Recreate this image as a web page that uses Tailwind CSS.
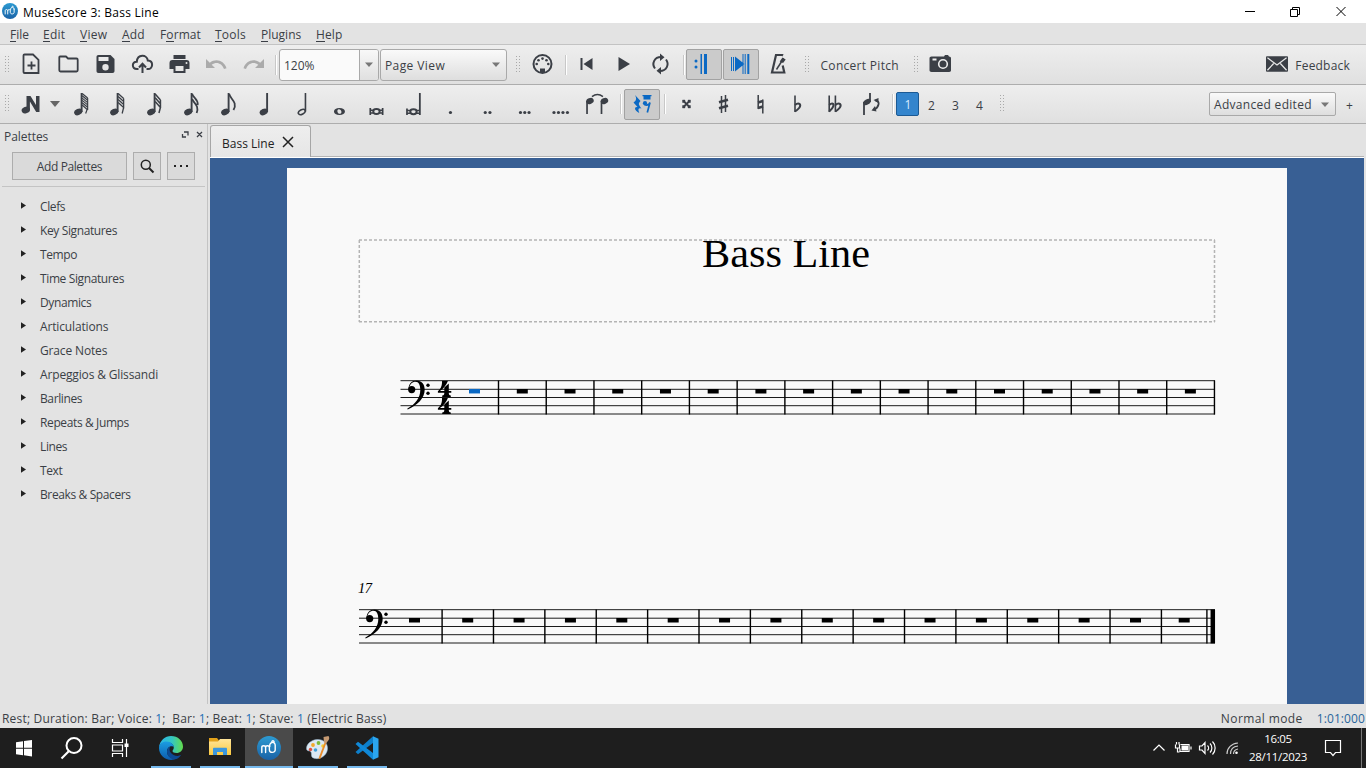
<!DOCTYPE html>
<html lang="en">
<head>
<meta charset="utf-8">
<title>MuseScore 3: Bass Line</title>
<script src="https://cdn.jsdelivr.net/npm/@tailwindcss/browser@4"></script>
</head>
<body class="w-[1366px] h-[768px] overflow-hidden flex flex-col bg-[#e3e3e3] text-[#3b3f46] text-[12px] leading-[16px] whitespace-nowrap font-['Open_Sans','Noto_Sans',sans-serif]">
<svg class="absolute w-0 h-0">
  <defs>
    <linearGradient id="edgeA" x1="0" y1="0" x2="1" y2="0"><stop offset="0" stop-color="#2bb5ea"/><stop offset=".55" stop-color="#35c6c0"/><stop offset="1" stop-color="#63dc4b"/></linearGradient>
    <linearGradient id="edgeB" x1="0" y1="0" x2="0" y2="1"><stop offset="0" stop-color="#1b9de2"/><stop offset="1" stop-color="#0d5cae"/></linearGradient>
    <linearGradient id="msg" x1="0" y1="0" x2="0" y2="1"><stop offset="0" stop-color="#2d9bd2"/><stop offset="1" stop-color="#1a62a6"/></linearGradient>
    <linearGradient id="fold" x1="0" y1="0" x2="0" y2="1"><stop offset="0" stop-color="#ffe59a"/><stop offset="1" stop-color="#fbc93f"/></linearGradient>
  </defs>
  <symbol id="grip" viewBox="0 0 5 18"><path d="M.5 0v18M3.500 0v18" stroke="#a9a9a9" stroke-width="1" stroke-dasharray="1 2"/></symbol>
  <symbol id="head" viewBox="0 0 24 24"><ellipse cx="8.800" cy="20" rx="4.300" ry="3.100" transform="rotate(-22 8.800 20)"/><path d="M11.200 1h1.900v19h-1.900z"/></symbol>
  <symbol id="mu" viewBox="0 0 24 24"><circle cx="12" cy="12" r="12" fill="url(#msg)"/><path d="M4.800 16.500V11.500c0-2.300 3.800-2.300 3.800 0v5M8.600 11.500c0-2.300 3.800-2.300 3.800 0v2.500c0 3.200 5.800 3.200 5.800 0V9M12.800 10.500c-.8-5 5.400-5.500 5.400-1M14.800 5.800c.3-1.500 2-1.500 2.300 0" fill="none" stroke="#fff" stroke-width="1.400" stroke-linecap="round"/></symbol>
  <symbol id="clef" viewBox="0 0 26 32"><circle cx="5.200" cy="9.300" r="3.600"/><path d="M2 9C2 3.500 5.500 .3 10 .3c5 0 8.200 3.500 8.200 9.200 0 8.500-7.200 15.500-17 19.700l-.5-.8C9 24 13.800 17.500 13.800 9.800 13.800 4.500 12.300 1.400 9 1.400 5.800 1.400 3 4 2.800 8z"/><circle cx="21.500" cy="5" r="1.700"/><circle cx="21.500" cy="13" r="1.700"/></symbol>
  <symbol id="four" viewBox="0 0 15 17"><path d="M4.500 .2h6C9 4.500 6 8 2.500 10.500h4.300V7l4.500-3.900v7.400h2.500v1.800h-2.500c0 1.700.4 2.600 2 2.800v1.300H4.700v-1.300c1.700-.2 2.100-1.100 2.100-2.800H.3v-1.600C3.800 8 4.700 4.500 4.500 .2z"/></symbol>
</svg>

<header class="h-[23px] shrink-0 bg-white flex items-center text-black">
  <svg class="ml-[2px] mb-[1px] w-4 h-4"><use href="#mu"/></svg>
  <span class="ml-[5px] mt-[2px] tracking-[0.25px]">MuseScore 3: Bass Line</span>
  <svg class="ml-auto w-[122px] h-[22px]" viewBox="1244 0 122 22" fill="none" stroke="#000"><path d="M1245 10.500h10M1290.500 8.500h7v7h-7zM1292.500 8.500v-2h7v7h-2M1336.500 6l9 9M1345.500 6l-9 9"/></svg>
</header>

<nav class="h-[21px] shrink-0 pl-[10px] pt-[2px] flex items-center [&>span]:shrink-0 [&_u]:no-underline [&_u]:inline-block [&_u]:h-[15px] [&_u]:border-b [&_u]:border-[#3b3f46]">
  <span class="w-[33px]"><u>F</u>ile</span><span class="w-[37px] tracking-[0.2px]"><u>E</u>dit</span><span class="w-[42px] tracking-[0.25px]"><u>V</u>iew</span><span class="w-[38px] tracking-[0.2px]"><u>A</u>dd</span><span class="w-[55px] tracking-[0.1px]">F<u>o</u>rmat</span><span class="w-[46px] tracking-[0.25px]"><u>T</u>ools</span><span class="w-[55px]"><u>P</u>lugins</span><span class="tracking-[0.1px]"><u>H</u>elp</span>
</nav>

<div class="h-[41px] shrink-0 pl-[5px] flex items-center border-t border-[#c3c3c3] border-b border-b-[#adadad] bg-linear-to-b from-[#eeeeee] to-[#e0e0e0] [&>*]:shrink-0">
  <svg class="w-[5px] h-[18px]"><use href="#grip"/></svg>
  <div class="ml-[3px] w-[259px] mb-px flex [&>svg]:w-[37px] [&>svg]:h-6 text-[#3b3f46]">
    <svg viewBox="-6.500 0 37 24" fill="none" stroke="currentColor" stroke-width="1.800"><path d="M5 2.500h8.500l5.500 5.300v13.200H5c-.7 0-1-.3-1-1V3.500c0-.7.3-1 1-1zM12 9.500v8M8 13.500h8"/></svg>
    <svg viewBox="-6.500 0 37 24" fill="none" stroke="currentColor" stroke-width="1.800" stroke-linejoin="round"><path d="M3.500 4.500h6l2 2H20c.8 0 1.200.4 1.200 1.200v10.600c0 .8-.4 1.200-1.200 1.200H4c-.8 0-1.200-.4-1.200-1.200V5.300c0-.5.200-.8.7-.8z"/></svg>
    <svg viewBox="-6.500 0 37 24" fill="currentColor" fill-rule="evenodd"><path d="M5 3h12l4 4v12c0 1.300-.7 2-2 2H5c-1.300 0-2-.7-2-2V5c0-1.300.7-2 2-2zm0 2v4h10V5zm7 7a3.200 3.200 0 1 0 0 6.400 3.200 3.200 0 0 0 0-6.400z"/></svg>
    <svg viewBox="-6.500 0 37 24" fill="none" stroke="currentColor" stroke-width="2"><path d="M8 17H6.500C1 17 1 9.500 6.300 9.700 7 2 16.500 2.200 17.300 8.500 23.500 9 22.500 17 17.500 17H16M12 21v-8M8.500 15.500l3.500-3.800 3.500 3.800"/></svg>
    <svg viewBox="-6.500 0 37 24" fill="currentColor" fill-rule="evenodd"><path d="M6 3h12v4H6zM5 8h14c2 0 3 1 3 3v6h-4v4H6v-4H2v-6c0-2 1-3 3-3zm3 6v5h8v-5zm11-4a1 1 0 1 0 0 2 1 1 0 0 0 0-2z"/></svg>
    <svg viewBox="-6.500 0 37 24" fill="#ababab"><path d="M1.500 7v9h9L7.200 12.700c5-3.500 10.300-1.200 12.300 4.300l2.500-.8C19.500 8.500 11.500 6 5.300 10.700z"/></svg>
    <svg viewBox="-6.500 0 37 24" fill="#ababab"><path d="M22.500 7v9h-9l3.300-3.300C11.800 9.200 6.500 11.500 4.500 17L2 16.200C4.500 8.500 12.500 6 18.700 10.700z"/></svg>
  </div>
  <i class="ml-[3px] w-[2px] h-5 border-l border-[#c8c8c8] bg-white"></i>
  <div class="ml-[2px] w-[100px] h-8 rounded-[3px] border border-[#a9a9a9] bg-[#fafafa] flex items-center overflow-hidden">
    <span class="pl-[4px] pt-[3px] w-[79px]">120%</span>
    <div class="flex-1 h-full border-l border-[#a9a9a9] bg-linear-to-b from-[#f8f8f8] to-[#e0e0e0] flex items-center justify-center"><svg class="w-2 h-[5px]" viewBox="0 0 8 5" fill="#777"><path d="M0 .5h8L4 5z"/></svg></div>
  </div>
  <div class="ml-[1px] w-[127px] h-8 rounded-[3px] border border-[#a9a9a9] bg-linear-to-b from-[#fafafa] to-[#dedede] flex items-center justify-between pl-1 pr-[6px]">
    <span class="pt-[3px] tracking-[0.4px]">Page View</span><svg class="w-2 h-[5px]" viewBox="0 0 8 5" fill="#777"><path d="M0 .5h8L4 5z"/></svg>
  </div>
  <svg class="ml-[9px] w-[5px] h-[18px]"><use href="#grip"/></svg>
  <svg class="ml-[2.500px] mb-px w-[37px] h-6" viewBox="-6.500 0 37 24"><circle cx="12" cy="12" r="9" fill="none" stroke="#3b3f46" stroke-width="2"/><g fill="#3b3f46"><path d="M9.500 16.500h5V21h-5z"/><circle cx="6.200" cy="12" r="1.300"/><circle cx="17.800" cy="12" r="1.300"/><circle cx="8" cy="8.300" r="1.300"/><circle cx="16" cy="8.300" r="1.300"/><circle cx="12" cy="6.600" r="1.300"/></g></svg>
  <i class="ml-[4px] w-[2px] h-5 border-l border-[#c8c8c8] bg-white"></i>
  <div class="ml-[1px] mb-px flex [&>svg]:w-[37px] [&>svg]:h-6 text-[#3b3f46]">
    <svg viewBox="-6.500 0 37 24" fill="currentColor"><path d="M6 6h2v12H6zM18 6v12L9 12z"/></svg>
    <svg viewBox="-6.500 0 37 24" fill="currentColor"><path d="M7 5l11.500 7L7 19z"/></svg>
    <svg viewBox="-6.500 0 37 24"><path d="M12.500 5C6 5 2.800 11.500 6.500 16.500M11.500 19c6.500 0 9.700-6.500 6-11.500" fill="none" stroke="currentColor" stroke-width="2"/><path d="M11.500 1.500v7.500L16 5.200zM12.500 15v7.500L8 18.800z" fill="currentColor"/></svg>
  </div>
  <i class="ml-[4px] w-[2px] h-5 border-l border-[#c8c8c8] bg-white"></i>
  <div class="ml-[1px] mb-px w-9 h-[31px] rounded-[2px] border border-[#a2a2a2] bg-[#cbcbcb] flex items-center justify-center"><svg class="w-6 h-6" fill="#0b69c4" viewBox="0 0 24 24"><circle cx="4" cy="9" r="1.500"/><circle cx="4" cy="15" r="1.500"/><path d="M8.500 2H10v20H8.500zM12 2h3v20h-3z"/></svg></div>
  <div class="ml-[1px] mb-px w-9 h-[31px] rounded-[2px] border border-[#a2a2a2] bg-[#cbcbcb] flex items-center justify-center"><svg class="w-6 h-6" fill="#0b69c4" viewBox="0 0 24 24"><path d="M2 5h1v14H2zM4 5h1v14H4zM6 4.500L15.500 12 6 19.500zM13.500 2h1v20h-1zM15.700 2h1v20h-1zM18.300 2h2v20h-2z"/></svg></div>
  <svg class="ml-px mb-px w-[37px] h-6" viewBox="-6.500 0 37 24" fill="none" stroke="#3b3f46"><path d="M16.500 3.500L15.800 3H9.500L5.500 20.500h12.300l-1.600-7" stroke-width="2.200"/><path d="M10 17.500L17 6.500" stroke-width="1.500"/><path d="M13.200 9.500l2.800-4 3.200 2-2.600 3.600z" fill="#3b3f46" stroke="none"/></svg>
  <svg class="ml-[8px] w-[5px] h-[18px]"><use href="#grip"/></svg>
  <span class="ml-[11px] w-[76px] pt-[3px] tracking-[0.3px]">Concert Pitch</span>
  <svg class="ml-[17px] w-[5px] h-[18px]"><use href="#grip"/></svg>
  <svg class="ml-[3px] mb-px w-[37px] h-6" viewBox="-6.500 0 37 24"><path d="M3 4.500h12.500l1-1.500h3l1 1.500c1.200 0 2 .7 2 1.800v12c0 1.200-.6 1.700-1.800 1.700H3c-1.200 0-2-.5-2-1.700v-12c0-1.100.8-1.800 2-1.800z" fill="#3b3f46"/><circle cx="14.500" cy="12" r="4.300" fill="none" stroke="#ededed" stroke-width="1.600"/><path d="M4 7.500h4" stroke="#eee" stroke-width="2"/></svg>
  <div class="ml-auto mr-4 flex items-center"><svg class="mb-[2px] w-[22px] h-4" viewBox="0 0 23 16"><rect width="23" height="16" rx="1" fill="#3b3f46"/><path d="M1.500 1.500L11.500 9l10-7.500M1.500 14.500L8 7.500M21.500 14.500L15 7.500" fill="none" stroke="#e8e8e8" stroke-width="1.300"/></svg><span class="ml-[7px] pt-[2px] tracking-[0.2px]">Feedback</span></div>
</div>

<div class="h-[39px] shrink-0 pl-[5px] flex items-center border-b border-[#adadad] bg-linear-to-b from-[#eeeeee] to-[#e0e0e0] [&>*]:shrink-0">
  <svg class="w-[5px] h-[18px]"><use href="#grip"/></svg>
  <svg class="ml-[9px] w-6 h-6" viewBox="0 0 24 24" fill="#3b3f46"><ellipse cx="6.800" cy="18" rx="4.300" ry="3.200" transform="rotate(-22 6.800 18)"/><path d="M7.500 4h4l5.500 9V4h3.500v16h-3.300L10.900 9.500V18H7.500z"/></svg>
  <svg class="ml-[6.500px] w-[10px] h-[6px]" viewBox="0 0 10 6" fill="#666"><path d="M0 0h10L5 6z"/></svg>
  <div class="ml-[3px] flex [&>svg]:w-[36.930px] [&>svg]:h-6 text-[#3b3f46]">
    <svg viewBox="-6.500 0 37 24" fill="currentColor"><use href="#head" width="24" height="24"/><path d="M12.700 1.500l5.500 4.500M12.700 3.800l5.500 4.500M12.700 6.100l5.500 4.500M12.700 8.400l5.500 4.500M12.700 10.700l5.500 4.500M12.700 13l5 4.500-1.500 4M18.200 6v12" fill="none" stroke="currentColor" stroke-width="1.200"/></svg>
    <svg viewBox="-6.500 0 37 24" fill="currentColor"><use href="#head" width="24" height="24"/><path d="M12.700 1.500l5.500 5M12.700 4.500l5.500 5M12.700 7.500l5.500 5M12.700 10.500l5.500 5-1.500 6M18.200 6.500v10" fill="none" stroke="currentColor" stroke-width="1.300"/></svg>
    <svg viewBox="-6.500 0 37 24" fill="currentColor"><use href="#head" width="24" height="24"/><path d="M12.700 2l5.300 6M12.700 5.800l5.300 6M12.700 9.500l5.300 6-1.500 5.500M18 8v8" fill="none" stroke="currentColor" stroke-width="1.500"/></svg>
    <svg viewBox="-6.500 0 37 24" fill="currentColor"><use href="#head" width="24" height="24"/><path d="M12.700 2c1 4 6.500 5 5.500 11M12.700 7c1 4 7.500 6 4.500 14" fill="none" stroke="currentColor" stroke-width="1.800"/></svg>
    <svg viewBox="-6.500 0 37 24" fill="currentColor"><use href="#head" width="24" height="24"/><path d="M12.700 2c1 5 9 8 4.300 16" fill="none" stroke="currentColor" stroke-width="1.800"/></svg>
    <svg viewBox="-6.500 0 37 24" fill="currentColor"><use href="#head" x="1.500" width="24" height="24"/></svg>
    <svg viewBox="-6.500 0 37 24" fill="none" stroke="currentColor"><ellipse cx="11.300" cy="20" rx="3.700" ry="2.200" transform="rotate(-28 11.300 20)" stroke-width="1.600"/><path d="M15 1v18.500" stroke-width="1.600"/></svg>
    <svg viewBox="-6.500 0 37 24" fill="currentColor" fill-rule="evenodd"><path d="M12 16c3.300 0 5.500 1.500 5.500 3.500S15.300 23 12 23s-5.500-1.500-5.500-3.500S8.700 16 12 16zm-.7 1.200c-2.300.3-1.500 4.800 1.400 4.600 2.300-.3 1.500-4.800-1.400-4.600z"/></svg>
    <svg viewBox="-6.500 0 37 24" fill="none" stroke="currentColor"><path d="M5.800 16v7M18.200 16v7" stroke-width="1.700"/><path d="M6 18.200h3M6 21h3M15 18.200h3M15 21h3" stroke-width="1.600"/><ellipse cx="12" cy="19.500" rx="3.200" ry="2.500" stroke-width="2"/></svg>
    <svg viewBox="-6.500 0 37 24" fill="none" stroke="currentColor"><path d="M18.400 1v22" stroke-width="1.800"/><path d="M5.500 16.500v6.500" stroke-width="1.700"/><path d="M5.500 18.500h3M5.500 21.300h3M15 18.500h3M15 21.300h3" stroke-width="1.500"/><ellipse cx="12" cy="19.800" rx="3.200" ry="2.500" stroke-width="2"/></svg>
    <svg viewBox="-6.500 0 37 24" fill="currentColor"><circle cx="12" cy="20.500" r="1.600"/></svg>
    <svg viewBox="-6.500 0 37 24" fill="currentColor"><circle cx="9.800" cy="20.500" r="1.600"/><circle cx="14.500" cy="20.500" r="1.600"/></svg>
    <svg viewBox="-6.500 0 37 24" fill="currentColor"><circle cx="8" cy="20.500" r="1.600"/><circle cx="12.300" cy="20.500" r="1.600"/><circle cx="16.600" cy="20.500" r="1.600"/></svg>
    <svg viewBox="-6.500 0 37 24" fill="currentColor"><circle cx="5.500" cy="20.500" r="1.600"/><circle cx="10" cy="20.500" r="1.600"/><circle cx="14.500" cy="20.500" r="1.600"/><circle cx="19" cy="20.500" r="1.600"/></svg>
    <svg viewBox="-6.500 0 37 24" fill="currentColor"><ellipse cx="4.500" cy="9" rx="3.900" ry="2.900" transform="rotate(-24 4.500 9)"/><ellipse cx="19" cy="9" rx="3.900" ry="2.900" transform="rotate(-24 19 9)"/><path d="M.7 9h1.700v13H.7zM15.200 9h1.700v13h-1.700z"/><path d="M6.500 4.500c4-3 7-3 11 0" fill="none" stroke="currentColor" stroke-width="1.600"/></svg>
  </div>
  <i class="ml-[4px] w-[2px] h-5 border-l border-[#c8c8c8] bg-white"></i>
  <div class="ml-[1.500px] w-9 h-[31px] rounded-[2px] border border-[#a2a2a2] bg-[#cbcbcb] flex items-center justify-center"><svg class="w-6 h-6" viewBox="0 0 24 24" fill="#0b69c4"><path d="M5 3l5.500 6c-2.500 2.500-2 3.500 1 7.500-3-.8-4 .5-2.200 4.500C4 18.500 4 14.500 7.500 15L3.500 10.500C6.500 8.500 6.800 6.500 5 3z"/><path d="M13.500 4h7v3.500h-7zM12.500 3h9v1.200h-9z"/><circle cx="15" cy="11.200" r="2.100"/><path d="M14.500 12.700c3 1 4.500.3 5.500-2.200L17.300 20.500" fill="none" stroke="#0b69c4" stroke-width="1.700"/></svg></div>
  <i class="ml-[4.500px] w-[2px] h-5 border-l border-[#c8c8c8] bg-white"></i>
  <div class="ml-[1.500px] flex [&>svg]:w-[37px] [&>svg]:h-6 text-[#3b3f46]">
    <svg viewBox="-6.500 0 37 24" fill="none" stroke="currentColor"><path d="M9 9l6 6M15 9l-6 6" stroke-width="1.800"/><path d="M8 8h2.500v2.500H8zM13.500 8H16v2.500h-2.500zM8 13.500h2.500V16H8zM13.500 13.500H16V16h-2.500z" fill="currentColor" stroke-width=".4"/></svg>
    <svg viewBox="-6.500 0 37 24" fill="none" stroke="currentColor"><path d="M10 4v17M14 3v17" stroke-width="1.500"/><path d="M7.500 10.200l9-2.500M7.500 16.200l9-2.500" stroke-width="2.500"/></svg>
    <svg viewBox="-6.500 0 37 24" fill="none" stroke="currentColor"><path d="M9.700 3v14M14.300 7.500v14" stroke-width="1.500"/><path d="M9.500 10.500l5-1.500M9.500 16l5-1.500" stroke-width="2.500"/></svg>
    <svg viewBox="-6.500 0 37 24" fill="none" stroke="currentColor"><path d="M9.500 3.500V20" stroke-width="1.600"/><path d="M9.500 13c3-2.500 6-1.500 5 1.500-.7 2-2.500 3.300-5 5" stroke-width="2.100"/></svg>
    <svg viewBox="-6.500 0 37 24" fill="none" stroke="currentColor"><path d="M6.700 3.500V20M12.900 3.500V20" stroke-width="1.600"/><path d="M6.700 13c3-2.500 5-1.500 4 1.500-.7 2-2 3.300-4 5M12.900 13c3-2.500 6-1.500 5 1.500-.7 2-2.500 3.300-5 5" stroke-width="2.100"/></svg>
    <svg viewBox="-6.500 0 37 24" fill="none" stroke="currentColor"><path d="M4.500 10v13M10.500 1v9" stroke-width="1.800"/><ellipse cx="7.500" cy="10" rx="4" ry="2.600" transform="rotate(-28 7.500 10)" fill="currentColor" stroke="none"/><path d="M16 8.500c3 .5 3.500 2 3 4-.5 2.500-2 4-4.500 5" stroke-width="1.800"/><path d="M14 8l5-2v5zM15.500 14l-3.500 4.500 5 1z" fill="currentColor" stroke="none"/></svg>
  </div>
  <i class="ml-[2px] w-[2px] h-5 border-l border-[#c8c8c8] bg-white"></i>
  <div class="ml-[2.500px] w-[23px] h-6 rounded-[2px] border border-[#1c5a94] bg-[#3485cd] text-[#d8ecff] flex items-center justify-center pt-[2px]">1</div>
  <div class="flex [&>span]:w-6 [&>span]:text-center pt-[3px]"><span>2</span><span>3</span><span>4</span></div>
  <svg class="ml-[9px] w-[5px] h-[18px]"><use href="#grip"/></svg>
  <div class="ml-auto w-[127px] h-6 rounded-[2px] border border-[#a9a9a9] bg-linear-to-b from-[#fafafa] to-[#dedede] flex items-center justify-between pl-1 pr-[6px]"><span class="pt-[2px] tracking-[0.3px]">Advanced edited</span><svg class="w-2 h-[5px]" viewBox="0 0 8 5" fill="#777"><path d="M0 .5h8L4 5z"/></svg></div>
  <span class="w-[30px] pl-[10px] pt-[3px]">+</span>
</div>

<main class="flex-1 min-h-0 flex">
  <aside class="w-[208px] shrink-0 border-r border-[#c4c4c4] flex flex-col">
    <div class="h-[24px] pl-1 pr-[4px] flex items-center"><span class="pt-px tracking-[-0.05px]">Palettes</span>
      <svg class="ml-auto mb-1 w-[22px] h-[9px]" viewBox="0 0 22 9" fill="none" stroke="#3b3f46" stroke-width="1.300"><path d="M3 2h4v3.500M5 7H1.500V4M16 2l5 5M21 2l-5 5"/></svg></div>
    <div class="mt-[4px] ml-3 flex h-7 gap-[6px] [&>*]:border [&>*]:border-[#adadad] [&>*]:bg-[#dadada] [&>*]:flex [&>*]:items-center [&>*]:justify-center">
      <div class="w-[115px] pt-[2px] tracking-[-0.4px]">Add Palettes</div>
      <div class="w-7"><svg class="w-4 h-4" viewBox="0 0 16 16" fill="none" stroke="#222"><circle cx="6.800" cy="6.800" r="4.500" stroke-width="1.500"/><path d="M10 10l4.500 4.500" stroke-width="2"/></svg></div>
      <div class="w-7"><svg class="w-4 h-4" viewBox="0 0 16 16" fill="#222"><path d="M1 7h2v2H1zM7 7h2v2H7zM13 7h2v2h-2z"/></svg></div>
    </div>
    <div class="mx-[2px] mt-[6px] h-px bg-[#c4c4c4]"></div>
    <ul id="palettes" class="mt-[7px]"></ul>
  </aside>
  <section class="flex-1 min-w-0 pl-[2px] pr-[2px] flex flex-col">
    <div class="h-[34px] shrink-0 flex items-end border-b border-white">
      <div class="w-[101px] h-[32px] rounded-t-[3px] border border-b-0 border-[#a6a6a6] bg-linear-to-b from-[#eeeeee] to-[#e6e6e6] flex items-center pl-[11px] pt-[3px] text-[#222]"><span class="pt-px">Bass Line</span><svg class="ml-[8px] mb-[3px] w-3 h-3" viewBox="0 0 12 12" stroke="#222" stroke-width="1.500"><path d="M1 1l10 10M11 1L1 11"/></svg></div>
      <div class="flex-1 border-b border-[#b4b4b4]"></div>
    </div>
    <div class="flex-1 min-h-0 bg-[#385f94] pl-[77px] pt-[10px]">
      <div class="w-[1000px] h-full bg-[#f9f9f9] text-black">
        <svg class="w-[1000px] h-[536px]" viewBox="287 168 1000 536">
          <g fill="none" stroke="#b4b4b4" stroke-width="1.500" stroke-dasharray="3 2"><path d="M359 240H1215M359 321.700H1215M359.300 240V322M1214.500 240V322"/></g>
          <text x="702" y="267" font-size="40" textLength="168" lengthAdjust="spacingAndGlyphs" font-family="Liberation Serif, serif">Bass Line</text>
          <g fill="none" stroke="#000">
            <path d="M400.500 380.700H1215M400.500 389.300H1215M400.500 397.500H1215M400.500 405.700H1215M400.500 414H1215M359 609.700H1215M359 618.200H1215M359 626.500H1215M359 634.700H1215M359 643H1215" stroke-width=".9"/>
            <path d="M497.800 397.400H1216" stroke-width="34" stroke-dasharray="1.400 46.330"/>
            <path d="M516.800 391.200H1200" stroke-width="4.500" stroke-dasharray="11 36.720"/>
            <path d="M469 391.200h11" stroke="#0b69c4" stroke-width="4.500"/>
            <path d="M441.400 626.400H1170" stroke-width="34" stroke-dasharray="1.400 49.980"/>
            <path d="M409 620.200h11M1178.700 620.200h11" stroke-width="4.500"/><path d="M462.200 620.200H1150" stroke-width="4.500" stroke-dasharray="11 40.370"/>
            <path d="M1206.900 609.400v34" stroke-width="1.400"/><path d="M1212.800 609.400v34" stroke-width="4.500"/>
          </g>
          <use href="#clef" x="406.500" y="380.300" width="26" height="32"/><use href="#clef" x="364.500" y="609.300" width="26" height="32"/>
          <use href="#four" x="437.500" y="380.500" width="15" height="17"/><use href="#four" x="437.500" y="397.500" width="15" height="17"/>
          <text x="358" y="593" font-size="14.500" font-style="italic" textLength="14" font-family="Liberation Serif, serif">17</text>
        </svg>
      </div>
    </div>
  </section>
</main>

<footer class="h-[24px] shrink-0 pl-[2px] flex items-center whitespace-pre pt-[5px]">
  <span class="tracking-[0.19px]">Rest; Duration: Bar; Voice: <b class="font-normal text-[#1f6fb5]">1</b>;  Bar: <b class="font-normal text-[#1f6fb5]">1</b>; Beat: <b class="font-normal text-[#1f6fb5]">1</b>; Stave: <b class="font-normal text-[#1f6fb5]">1</b> (Electric Bass)</span>
  <span class="ml-auto tracking-[0.4px]">Normal mode</span><span class="ml-[14px] mr-px text-[#2a659c] tracking-[0.1px]">1:01:000</span>
</footer>

<div class="h-10 shrink-0 bg-[#1e1e1e] flex text-white [&>*]:shrink-0">
  <svg class="w-[145px] h-10" viewBox="0 0 145 40" fill="none" stroke="#fff"><path d="M16 14.300l7-1v6.500h-7zM24 13.100l8-1.100v7.800h-8zM16 20.800h7v6.400l-7-1zM24 20.800h8v7.600l-8-1.100z" fill="#fff" stroke="none"/><circle cx="74" cy="17.500" r="7.500" stroke-width="2"/><path d="M69 23l-7.500 7.500" stroke-width="2.200"/><path d="M112.500 11v3.500h10V11M112.500 29v-3.500h10V29M112.500 17h10v6h-10zM126.500 11v18" stroke-width="1.200"/><path d="M124.500 15.500h4v3.500h-4z" fill="#fff" stroke="none"/></svg>
  <div class="ml-[6px] w-10 border-b-2 border-[#76b9ed] flex items-center justify-center pt-[2px]"><svg class="w-6 h-6" viewBox="0 0 24 24"><path d="M0 11C1 4.500 6 0 12 0c7 0 12 5 12 10.500 0 4-3 6.500-6.500 6.500-2.500 0-4-1-4-2 0-.8 1.300-1.300 1.300-3.500C14.800 5.500 3 4 0 11z" fill="url(#edgeA)"/><path d="M0 12c0-4 3.500-6.500 7.500-6.500 4.500 0 7.300 3 7.300 6-1.200-2.500-6.800-1-6.800 4 0 4.500 4.500 8 9.500 7.300C9 26.500 0 20.500 0 12z" fill="url(#edgeB)"/><path d="M8 15.500c0-2.500 1.500-4.500 3.500-5-3 4 1.500 9.500 7 9.500 1.500 0 2.500-.5 3.800-1.200-1.600 2.500-4 4.500-6.500 4.500C11.500 23.300 8 20 8 15.500z" fill="#0c4a93"/></svg></div>
  <div class="ml-[9px] w-10 border-b-2 border-[#76b9ed] flex items-center justify-center"><svg class="w-[22px] h-[20px]" viewBox="0 0 22 20"><path d="M0 1h8l2 2.500V18H0z" fill="#e3a21a"/><path d="M0 4.500h9L11 2h11v16H0z" fill="url(#fold)"/><path d="M4 18v-6c0-.8.400-1.200 1.200-1.200h11.600c.8 0 1.200.4 1.200 1.200v6h-4v-3H8v3z" fill="#3a96dd"/></svg></div>
  <div class="ml-[5px] w-12 bg-[#4a4a4a] border-b-2 border-[#76b9ed] flex items-center justify-center pt-[2px]"><svg class="w-6 h-6"><use href="#mu"/></svg></div>
  <div class="ml-[5px] w-10 border-b-2 border-[#76b9ed] flex items-center justify-center pt-[2px]"><svg class="w-6 h-6" viewBox="0 0 24 24"><path d="M11 3.500C5 4 .5 8 .5 12.500c0 3.500 3.500 1.500 4.500 3.500 1.200 2.500-1 5.500 4 6.500 6 1 12-3.500 12.500-9.500C22 7 17 3 11 3.500z" fill="#dce8f2" stroke="#9bb8d0" stroke-width=".5"/><circle cx="7" cy="9" r="1.900" fill="#f2a92c"/><circle cx="12.500" cy="7" r="1.900" fill="#7cbb3a"/><circle cx="4.500" cy="13.500" r="1.700" fill="#e04f3e"/><circle cx="9.500" cy="14" r="1.800" fill="#42a0d8"/><circle cx="17" cy="10" r="1.800" fill="#f4cd33"/><path d="M19 5.500l1.500 1-6 16-2 .5.500-2z" fill="#e98c2b"/><path d="M17.500 1l5-1c1.500 2 .5 4-1 5.500l-1.500 2-2-1.200z" fill="#c69a72"/></svg></div>
  <div class="ml-[9px] w-10 border-b-2 border-[#76b9ed] flex items-center justify-center pt-[2px]"><svg class="w-6 h-6" viewBox="0 0 24 24"><path d="M18 .3l5.500 2.400v18.600L18 23.700z" fill="#2ba5ee"/><path d="M18 .3V7L3 18.300.5 16z" fill="#0d7fcb"/><path d="M18 23.700V17L3 5.700.5 8z" fill="#1089d8"/></svg></div>
  <svg class="ml-auto w-[94px] h-10" viewBox="1149 728 94 40" fill="none" stroke="#fff" stroke-width="1.200"><path d="M1153.500 750.500l5.500-5.500 5.500 5.500M1180.500 744.500h8.500v7h-9v-3M1175.500 744.500v3.500h4v-3.500M1176.500 742v2.500M1179 742v2.500M1177.500 748v4h2M1191 746.500v3"/><path d="M1181.500 745.500h6.500v5h-6.500z" fill="#fff" stroke="none"/><path d="M1199.500 746v4h2.500l3 3.500v-11l-3 3.500zM1207.500 745.500c1.500 1.500 1.500 3.500 0 5M1210 743.500c2.500 2.500 2.500 6.500 0 9M1212.500 741.500c3.500 3.500 3.500 9.500 0 13"/><path d="M1227 754c0-6 4.500-10.500 11-11M1230.500 754c0-4.500 3-7.500 7.500-8M1233.500 754c0-2.500 1.500-4.500 4.500-5" stroke="#ccc"/><circle cx="1236.500" cy="752.800" r="1.300" fill="#fff" stroke="none"/></svg>
  <div class="w-[70px] text-center text-[11.500px] leading-[18px] pt-[2px] tracking-[-0.4px]"><div>16:05</div><div class="tracking-[-0.3px]">28/11/2023</div></div>
  <svg class="w-[53px] h-10" viewBox="1313 728 53 40" fill="none" stroke="#fff" stroke-width="1.200"><path d="M1325.500 740.500h15v12h-5l-2.500 3-2.500-3h-5z"/><path d="M1361.500 728v40" stroke="#777" stroke-width="1"/></svg>
</div>
<script>
document.getElementById('palettes').innerHTML = ['Clefs','Key Signatures','Tempo','Time Signatures','Dynamics','Articulations','Grace Notes','Arpeggios & Glissandi','Barlines','Repeats & Jumps','Lines','Text','Breaks & Spacers'].map(t => `<li class="h-6 pl-[21px] flex items-center"><svg class="w-[5px] h-[7px] mr-[14px] mb-[2px]" viewBox="0 0 6 8" fill="#222"><path d="M0 0v8l6-4z"/></svg><span class="pt-px ${/^(Art|Arp|Grace)/.test(t) ? 'tracking-[-0.15px]' : 'tracking-[-0.38px]'}">${t.replace('&','&amp;')}</span></li>`).join('');
</script>
</body>
</html>
